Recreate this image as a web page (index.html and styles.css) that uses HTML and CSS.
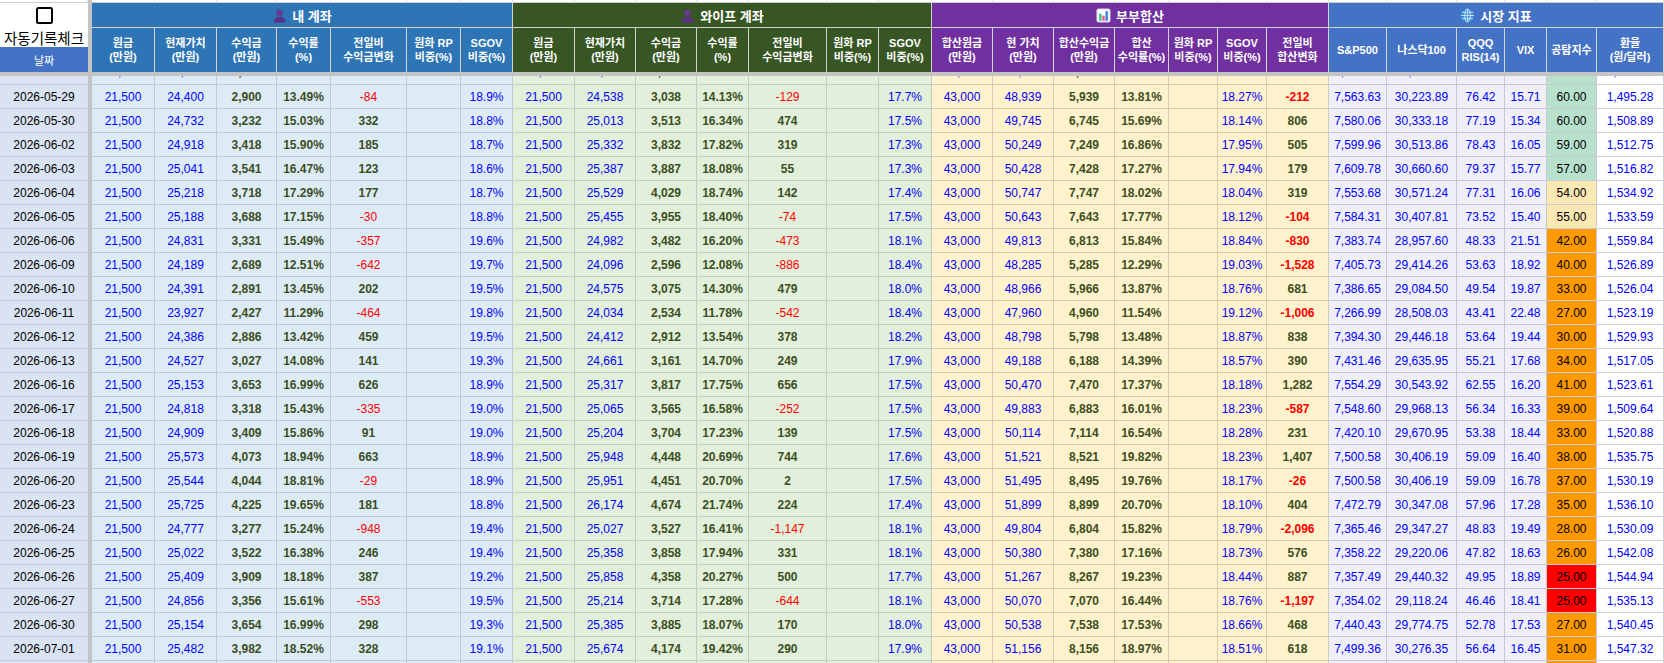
FILE: index.html
```html
<!DOCTYPE html>
<html lang="ko">
<head>
<meta charset="utf-8">
<title>자동기록체크</title>
<link rel="stylesheet" href="styles.css">
</head>
<body>
<div class="sheet">
  <div class="freeze-v"></div>
  <div class="freeze-h"></div>

  <div class="row top"><span></span><span></span><span></span><span></span><span></span><span></span><span></span><span></span><span></span><span></span><span></span><span></span><span></span><span></span><span></span><span></span><span></span><span></span><span></span><span></span><span></span><span></span><span></span><span></span><span></span><span></span><span></span><span></span></div>

  <div class="row grp">
    <span class="chk-cell"><i class="chk"></i></span>
    <span class="g-mine"><svg class="ico" viewBox="0 0 16 16"><circle cx="8" cy="5" r="3.4" fill="#64398f"/><path d="M1.6 15.5c0-4.1 2.7-6.2 6.4-6.2s6.4 2.1 6.4 6.2z" fill="#5a2f87"/></svg>내 계좌</span>
    <span class="g-wife"><svg class="ico" viewBox="0 0 16 16"><circle cx="8" cy="5" r="3.4" fill="#64398f"/><path d="M1.6 15.5c0-4.1 2.7-6.2 6.4-6.2s6.4 2.1 6.4 6.2z" fill="#5a2f87"/></svg>와이프 계좌</span>
    <span class="g-sum"><svg class="ico" viewBox="0 0 16 16"><rect x="1" y="1" width="14" height="14" rx="1.5" fill="#fff" stroke="#cfcfd8"/><rect x="3.3" y="6" width="2.6" height="7.6" fill="#3cbf8c"/><rect x="6.7" y="8.2" width="2.6" height="5.4" fill="#ef5a86"/><rect x="10.1" y="3.4" width="2.6" height="10.2" fill="#3d7fe0"/></svg>부부합산</span>
    <span class="g-mkt"><svg class="ico" viewBox="0 0 16 16"><circle cx="8" cy="8" r="7" fill="#3b8fd9"/><g fill="none" stroke="#d4e9fb" stroke-width="0.9"><ellipse cx="8" cy="8" rx="3" ry="7"/><path d="M8 1v14M1 8h14M2.2 4.6h11.6M2.2 11.4h11.6"/></g></svg>시장 지표</span>
  </div>

  <div class="row hd">
    <span class="auto">자동기록체크</span>
    <span class="h-mine"><span>원금<br>(만원)</span></span>
    <span class="h-mine"><span>현재가치<br>(만원)</span></span>
    <span class="h-mine"><span>수익금<br>(만원)</span></span>
    <span class="h-mine"><span>수익률<br>(%)</span></span>
    <span class="h-mine"><span>전일비<br>수익금변화</span></span>
    <span class="h-mine"><span>원화 RP<br>비중(%)</span></span>
    <span class="h-mine"><span>SGOV<br>비중(%)</span></span>
    <span class="h-wife"><span>원금<br>(만원)</span></span>
    <span class="h-wife"><span>현재가치<br>(만원)</span></span>
    <span class="h-wife"><span>수익금<br>(만원)</span></span>
    <span class="h-wife"><span>수익률<br>(%)</span></span>
    <span class="h-wife"><span>전일비<br>수익금변화</span></span>
    <span class="h-wife"><span>원화 RP<br>비중(%)</span></span>
    <span class="h-wife"><span>SGOV<br>비중(%)</span></span>
    <span class="h-sum"><span>합산원금<br>(만원)</span></span>
    <span class="h-sum"><span>현 가치<br>(만원)</span></span>
    <span class="h-sum"><span>합산수익금<br>(만원)</span></span>
    <span class="h-sum"><span>합산<br>수익률(%)</span></span>
    <span class="h-sum"><span>원화 RP<br>비중(%)</span></span>
    <span class="h-sum"><span>SGOV<br>비중(%)</span></span>
    <span class="h-sum"><span>전일비<br>합산변화</span></span>
    <span class="h-mkt"><span>S&amp;P500</span></span>
    <span class="h-mkt"><span>나스닥100</span></span>
    <span class="h-mkt"><span>QQQ<br>RIS(14)</span></span>
    <span class="h-mkt"><span>VIX</span></span>
    <span class="h-mkt"><span>공탐지수</span></span>
    <span class="h-mkt"><span>환율<br>(원/달러)</span></span>
  </div>
  <div class="row dh"><span>날짜</span></div>

  <div class="row r part"><span></span><span>21,500</span><span>24,484</span><span>2,984</span><span>13.88%</span><span>166</span><span></span><span>18.7%</span><span>21,500</span><span>24,667</span><span>3,167</span><span>14.73%</span><span>214</span><span></span><span>17.6%</span><span>43,000</span><span>49,151</span><span>6,151</span><span>14.30%</span><span></span><span>18.15%</span><span>380</span><span>7,552.14</span><span>30,418.52</span><span>78.10</span><span>15.20</span><span class="fg">61.00</span><span>1,492.66</span></div>

  <div class="row r"><span>2026-05-29</span><span>21,500</span><span>24,400</span><span>2,900</span><span>13.49%</span><span class="neg">-84</span><span></span><span>18.9%</span><span>21,500</span><span>24,538</span><span>3,038</span><span>14.13%</span><span class="neg">-129</span><span></span><span>17.7%</span><span>43,000</span><span>48,939</span><span>5,939</span><span>13.81%</span><span></span><span>18.27%</span><span class="neg">-212</span><span>7,563.63</span><span>30,223.89</span><span>76.42</span><span>15.71</span><span class="fg">60.00</span><span>1,495.28</span></div>
  <div class="row r"><span>2026-05-30</span><span>21,500</span><span>24,732</span><span>3,232</span><span>15.03%</span><span>332</span><span></span><span>18.8%</span><span>21,500</span><span>25,013</span><span>3,513</span><span>16.34%</span><span>474</span><span></span><span>17.5%</span><span>43,000</span><span>49,745</span><span>6,745</span><span>15.69%</span><span></span><span>18.14%</span><span>806</span><span>7,580.06</span><span>30,333.18</span><span>77.19</span><span>15.34</span><span class="fg">60.00</span><span>1,508.89</span></div>
  <div class="row r"><span>2026-06-02</span><span>21,500</span><span>24,918</span><span>3,418</span><span>15.90%</span><span>185</span><span></span><span>18.7%</span><span>21,500</span><span>25,332</span><span>3,832</span><span>17.82%</span><span>319</span><span></span><span>17.3%</span><span>43,000</span><span>50,249</span><span>7,249</span><span>16.86%</span><span></span><span>17.95%</span><span>505</span><span>7,599.96</span><span>30,513.86</span><span>78.43</span><span>16.05</span><span class="fg">59.00</span><span>1,512.75</span></div>
  <div class="row r"><span>2026-06-03</span><span>21,500</span><span>25,041</span><span>3,541</span><span>16.47%</span><span>123</span><span></span><span>18.6%</span><span>21,500</span><span>25,387</span><span>3,887</span><span>18.08%</span><span>55</span><span></span><span>17.3%</span><span>43,000</span><span>50,428</span><span>7,428</span><span>17.27%</span><span></span><span>17.94%</span><span>179</span><span>7,609.78</span><span>30,660.60</span><span>79.37</span><span>15.77</span><span class="fg">57.00</span><span>1,516.82</span></div>
  <div class="row r"><span>2026-06-04</span><span>21,500</span><span>25,218</span><span>3,718</span><span>17.29%</span><span>177</span><span></span><span>18.7%</span><span>21,500</span><span>25,529</span><span>4,029</span><span>18.74%</span><span>142</span><span></span><span>17.4%</span><span>43,000</span><span>50,747</span><span>7,747</span><span>18.02%</span><span></span><span>18.04%</span><span>319</span><span>7,553.68</span><span>30,571.24</span><span>77.31</span><span>16.06</span><span class="fy">54.00</span><span>1,534.92</span></div>
  <div class="row r"><span>2026-06-05</span><span>21,500</span><span>25,188</span><span>3,688</span><span>17.15%</span><span class="neg">-30</span><span></span><span>18.8%</span><span>21,500</span><span>25,455</span><span>3,955</span><span>18.40%</span><span class="neg">-74</span><span></span><span>17.5%</span><span>43,000</span><span>50,643</span><span>7,643</span><span>17.77%</span><span></span><span>18.12%</span><span class="neg">-104</span><span>7,584.31</span><span>30,407.81</span><span>73.52</span><span>15.40</span><span class="fy">55.00</span><span>1,533.59</span></div>
  <div class="row r"><span>2026-06-06</span><span>21,500</span><span>24,831</span><span>3,331</span><span>15.49%</span><span class="neg">-357</span><span></span><span>19.6%</span><span>21,500</span><span>24,982</span><span>3,482</span><span>16.20%</span><span class="neg">-473</span><span></span><span>18.1%</span><span>43,000</span><span>49,813</span><span>6,813</span><span>15.84%</span><span></span><span>18.84%</span><span class="neg">-830</span><span>7,383.74</span><span>28,957.60</span><span>48.33</span><span>21.51</span><span class="fo">42.00</span><span>1,559.84</span></div>
  <div class="row r"><span>2026-06-09</span><span>21,500</span><span>24,189</span><span>2,689</span><span>12.51%</span><span class="neg">-642</span><span></span><span>19.7%</span><span>21,500</span><span>24,096</span><span>2,596</span><span>12.08%</span><span class="neg">-886</span><span></span><span>18.4%</span><span>43,000</span><span>48,285</span><span>5,285</span><span>12.29%</span><span></span><span>19.03%</span><span class="neg">-1,528</span><span>7,405.73</span><span>29,414.26</span><span>53.63</span><span>18.92</span><span class="fo">40.00</span><span>1,526.89</span></div>
  <div class="row r"><span>2026-06-10</span><span>21,500</span><span>24,391</span><span>2,891</span><span>13.45%</span><span>202</span><span></span><span>19.5%</span><span>21,500</span><span>24,575</span><span>3,075</span><span>14.30%</span><span>479</span><span></span><span>18.0%</span><span>43,000</span><span>48,966</span><span>5,966</span><span>13.87%</span><span></span><span>18.76%</span><span>681</span><span>7,386.65</span><span>29,084.50</span><span>49.54</span><span>19.87</span><span class="fo">33.00</span><span>1,526.04</span></div>
  <div class="row r"><span>2026-06-11</span><span>21,500</span><span>23,927</span><span>2,427</span><span>11.29%</span><span class="neg">-464</span><span></span><span>19.8%</span><span>21,500</span><span>24,034</span><span>2,534</span><span>11.78%</span><span class="neg">-542</span><span></span><span>18.4%</span><span>43,000</span><span>47,960</span><span>4,960</span><span>11.54%</span><span></span><span>19.12%</span><span class="neg">-1,006</span><span>7,266.99</span><span>28,508.03</span><span>43.41</span><span>22.48</span><span class="fo">27.00</span><span>1,523.19</span></div>
  <div class="row r"><span>2026-06-12</span><span>21,500</span><span>24,386</span><span>2,886</span><span>13.42%</span><span>459</span><span></span><span>19.5%</span><span>21,500</span><span>24,412</span><span>2,912</span><span>13.54%</span><span>378</span><span></span><span>18.2%</span><span>43,000</span><span>48,798</span><span>5,798</span><span>13.48%</span><span></span><span>18.87%</span><span>838</span><span>7,394.30</span><span>29,446.18</span><span>53.64</span><span>19.44</span><span class="fo">30.00</span><span>1,529.93</span></div>
  <div class="row r"><span>2026-06-13</span><span>21,500</span><span>24,527</span><span>3,027</span><span>14.08%</span><span>141</span><span></span><span>19.3%</span><span>21,500</span><span>24,661</span><span>3,161</span><span>14.70%</span><span>249</span><span></span><span>17.9%</span><span>43,000</span><span>49,188</span><span>6,188</span><span>14.39%</span><span></span><span>18.57%</span><span>390</span><span>7,431.46</span><span>29,635.95</span><span>55.21</span><span>17.68</span><span class="fo">34.00</span><span>1,517.05</span></div>
  <div class="row r"><span>2026-06-16</span><span>21,500</span><span>25,153</span><span>3,653</span><span>16.99%</span><span>626</span><span></span><span>18.9%</span><span>21,500</span><span>25,317</span><span>3,817</span><span>17.75%</span><span>656</span><span></span><span>17.5%</span><span>43,000</span><span>50,470</span><span>7,470</span><span>17.37%</span><span></span><span>18.18%</span><span>1,282</span><span>7,554.29</span><span>30,543.92</span><span>62.55</span><span>16.20</span><span class="fo">41.00</span><span>1,523.61</span></div>
  <div class="row r"><span>2026-06-17</span><span>21,500</span><span>24,818</span><span>3,318</span><span>15.43%</span><span class="neg">-335</span><span></span><span>19.0%</span><span>21,500</span><span>25,065</span><span>3,565</span><span>16.58%</span><span class="neg">-252</span><span></span><span>17.5%</span><span>43,000</span><span>49,883</span><span>6,883</span><span>16.01%</span><span></span><span>18.23%</span><span class="neg">-587</span><span>7,548.60</span><span>29,968.13</span><span>56.34</span><span>16.33</span><span class="fo">39.00</span><span>1,509.64</span></div>
  <div class="row r"><span>2026-06-18</span><span>21,500</span><span>24,909</span><span>3,409</span><span>15.86%</span><span>91</span><span></span><span>19.0%</span><span>21,500</span><span>25,204</span><span>3,704</span><span>17.23%</span><span>139</span><span></span><span>17.5%</span><span>43,000</span><span>50,114</span><span>7,114</span><span>16.54%</span><span></span><span>18.28%</span><span>231</span><span>7,420.10</span><span>29,670.95</span><span>53.38</span><span>18.44</span><span class="fo">33.00</span><span>1,520.88</span></div>
  <div class="row r"><span>2026-06-19</span><span>21,500</span><span>25,573</span><span>4,073</span><span>18.94%</span><span>663</span><span></span><span>18.9%</span><span>21,500</span><span>25,948</span><span>4,448</span><span>20.69%</span><span>744</span><span></span><span>17.6%</span><span>43,000</span><span>51,521</span><span>8,521</span><span>19.82%</span><span></span><span>18.23%</span><span>1,407</span><span>7,500.58</span><span>30,406.19</span><span>59.09</span><span>16.40</span><span class="fo">38.00</span><span>1,535.75</span></div>
  <div class="row r"><span>2026-06-20</span><span>21,500</span><span>25,544</span><span>4,044</span><span>18.81%</span><span class="neg">-29</span><span></span><span>18.9%</span><span>21,500</span><span>25,951</span><span>4,451</span><span>20.70%</span><span>2</span><span></span><span>17.5%</span><span>43,000</span><span>51,495</span><span>8,495</span><span>19.76%</span><span></span><span>18.17%</span><span class="neg">-26</span><span>7,500.58</span><span>30,406.19</span><span>59.09</span><span>16.78</span><span class="fo">37.00</span><span>1,530.19</span></div>
  <div class="row r"><span>2026-06-23</span><span>21,500</span><span>25,725</span><span>4,225</span><span>19.65%</span><span>181</span><span></span><span>18.8%</span><span>21,500</span><span>26,174</span><span>4,674</span><span>21.74%</span><span>224</span><span></span><span>17.4%</span><span>43,000</span><span>51,899</span><span>8,899</span><span>20.70%</span><span></span><span>18.10%</span><span>404</span><span>7,472.79</span><span>30,347.08</span><span>57.96</span><span>17.28</span><span class="fo">35.00</span><span>1,536.10</span></div>
  <div class="row r"><span>2026-06-24</span><span>21,500</span><span>24,777</span><span>3,277</span><span>15.24%</span><span class="neg">-948</span><span></span><span>19.4%</span><span>21,500</span><span>25,027</span><span>3,527</span><span>16.41%</span><span class="neg">-1,147</span><span></span><span>18.1%</span><span>43,000</span><span>49,804</span><span>6,804</span><span>15.82%</span><span></span><span>18.79%</span><span class="neg">-2,096</span><span>7,365.46</span><span>29,347.27</span><span>48.83</span><span>19.49</span><span class="fo">28.00</span><span>1,530.09</span></div>
  <div class="row r"><span>2026-06-25</span><span>21,500</span><span>25,022</span><span>3,522</span><span>16.38%</span><span>246</span><span></span><span>19.4%</span><span>21,500</span><span>25,358</span><span>3,858</span><span>17.94%</span><span>331</span><span></span><span>18.1%</span><span>43,000</span><span>50,380</span><span>7,380</span><span>17.16%</span><span></span><span>18.73%</span><span>576</span><span>7,358.22</span><span>29,220.06</span><span>47.82</span><span>18.63</span><span class="fo">26.00</span><span>1,542.08</span></div>
  <div class="row r"><span>2026-06-26</span><span>21,500</span><span>25,409</span><span>3,909</span><span>18.18%</span><span>387</span><span></span><span>19.2%</span><span>21,500</span><span>25,858</span><span>4,358</span><span>20.27%</span><span>500</span><span></span><span>17.7%</span><span>43,000</span><span>51,267</span><span>8,267</span><span>19.23%</span><span></span><span>18.44%</span><span>887</span><span>7,357.49</span><span>29,440.32</span><span>49.95</span><span>18.89</span><span class="fr">25.00</span><span>1,544.94</span></div>
  <div class="row r"><span>2026-06-27</span><span>21,500</span><span>24,856</span><span>3,356</span><span>15.61%</span><span class="neg">-553</span><span></span><span>19.5%</span><span>21,500</span><span>25,214</span><span>3,714</span><span>17.28%</span><span class="neg">-644</span><span></span><span>18.1%</span><span>43,000</span><span>50,070</span><span>7,070</span><span>16.44%</span><span></span><span>18.76%</span><span class="neg">-1,197</span><span>7,354.02</span><span>29,118.24</span><span>46.46</span><span>18.41</span><span class="fr">25.00</span><span>1,535.13</span></div>
  <div class="row r"><span>2026-06-30</span><span>21,500</span><span>25,154</span><span>3,654</span><span>16.99%</span><span>298</span><span></span><span>19.3%</span><span>21,500</span><span>25,385</span><span>3,885</span><span>18.07%</span><span>170</span><span></span><span>18.0%</span><span>43,000</span><span>50,538</span><span>7,538</span><span>17.53%</span><span></span><span>18.66%</span><span>468</span><span>7,440.43</span><span>29,774.75</span><span>52.78</span><span>17.53</span><span class="fo">27.00</span><span>1,540.45</span></div>
  <div class="row r"><span>2026-07-01</span><span>21,500</span><span>25,482</span><span>3,982</span><span>18.52%</span><span>328</span><span></span><span>19.1%</span><span>21,500</span><span>25,674</span><span>4,174</span><span>19.42%</span><span>290</span><span></span><span>17.9%</span><span>43,000</span><span>51,156</span><span>8,156</span><span>18.97%</span><span></span><span>18.51%</span><span>618</span><span>7,499.36</span><span>30,276.35</span><span>56.64</span><span>16.45</span><span class="fo">31.00</span><span>1,547.32</span></div>
  <div class="row r"><span></span><span></span><span></span><span></span><span></span><span></span><span></span><span></span><span></span><span></span><span></span><span></span><span></span><span></span><span></span><span></span><span></span><span></span><span></span><span></span><span></span><span></span><span></span><span></span><span></span><span></span><span class="fo"></span><span></span></div>
</div>
</body>
</html>
```
FILE: styles.css
```css
html, body {
  margin: 0;
  padding: 0;
  height: 663px;
  overflow: hidden;
  background: #ffffff;
}

.sheet {
  display: grid;
  grid-template-columns:
    88px 4px
    63px 62px 60px 54px 76px 54px 52px
    62px 61px 61px 52px 78px 52px 53px
    61px 61px 61px 54px 49px 49px 62px
    58px 70px 48px 42px 50px 67px;
  grid-template-rows: 3px 25px 19px 25px 4px 9px repeat(25, 24px);
  font-family: "Liberation Sans", Arial, "Noto Sans CJK KR", sans-serif;
  font-size: 12px;
  color: #000;
}

.row { display: contents; }

.freeze-v {
  grid-column: 2;
  grid-row: 1 / -1;
  background: #c4c4c4;
}
.freeze-h {
  grid-column: 1 / -1;
  grid-row: 5;
  background: #c4c4c4;
}

.row > span {
  display: flex;
  align-items: center;
  justify-content: center;
  box-sizing: border-box;
  overflow: hidden;
  white-space: nowrap;
  text-align: center;
}

/* top strip */
.top > span {
  background: #fff;
  border-right: 1px solid #e2e2e2;
  border-bottom: 1px solid #cdcdcd;
}

/* group headers */
.grp > span {
  color: #fff;
  font-weight: bold;
  font-size: 13px;
  gap: 5px;
  border-right: 1px solid #d2d2d2;
  border-bottom: 1px solid #d2d2d2;
}
.grp > .chk-cell {
  background: #fff;
  border: none;
}
.chk {
  display: block;
  width: 17px;
  height: 17px;
  box-sizing: border-box;
  border: 2.5px solid #000;
  border-radius: 2.5px;
}
.ico { width: 15px; height: 15px; flex: none; }
.g-mine { grid-column: span 7; background: #2e75b6; }
.g-wife { grid-column: span 7; background: #375623; }
.g-sum { grid-column: span 7; background: #7030a0; }
.g-mkt { grid-column: span 6; background: #4472c4; }

/* column headers */
.hd > span {
  grid-row: span 2;
  color: #fff;
  font-weight: bold;
  font-size: 11px;
  line-height: 14px;
  border-right: 1px solid #d2d2d2;
}
.hd > .auto {
  grid-row: span 1;
  background: #fff;
  color: #000;
  font-weight: normal;
  font-size: 14.5px;
  line-height: 19px;
  border: none;
  font-family: "Noto Sans CJK KR", sans-serif;
}
.h-mine { background: #2e75b6; }
.h-wife { background: #375623; }
.h-sum { background: #7030a0; }
.h-mkt { background: #4472c4; }

.dh > span {
  background: #4472c4;
  color: #fff;
  font-size: 11px;
}

/* data rows */
.r > span {
  border-right: 1px solid #c2c9d1;
  border-bottom: 1px solid #c2c9d1;
}
.part > span {
  align-items: flex-end;
  line-height: 23px;
}

.r > :nth-child(1) { background: #dae3f3; border-right: none; }
.r > :nth-child(n+2):nth-child(-n+8) { background: #ddebf7; }
.r > :nth-child(n+9):nth-child(-n+15) { background: #e2efda; border-color: #c4cdbd; }
.r > :nth-child(n+16):nth-child(-n+22) { background: #fff2cc; border-color: #d3cdb8; }
.r > :nth-child(n+23):nth-child(-n+26) { background: #efeff7; border-color: #c9c9d3; }
.r > :nth-child(27) { background: #efeff7; border-color: #c9c9d3; }
.r > :nth-child(28) { background: #ffffff; border-color: #cfcfd6; }

.r > .fg { background: #b7e1cd; }
.r > .fy { background: #fce8b2; }
.r > .fo { background: #ff9900; }
.r > .fr { background: #ff0000; }

/* text colours */
.r > :nth-child(2), .r > :nth-child(3), .r > :nth-child(8),
.r > :nth-child(9), .r > :nth-child(10), .r > :nth-child(15),
.r > :nth-child(16), .r > :nth-child(17), .r > :nth-child(21),
.r > :nth-child(23), .r > :nth-child(24), .r > :nth-child(25),
.r > :nth-child(26), .r > :nth-child(28) {
  color: #0000ff;
}
.r > :nth-child(4), .r > :nth-child(5), .r > :nth-child(6),
.r > :nth-child(11), .r > :nth-child(12), .r > :nth-child(13),
.r > :nth-child(18), .r > :nth-child(19), .r > :nth-child(22) {
  color: #3b4e1e;
  font-weight: bold;
}
.r > .neg { color: #ff0000; font-weight: normal; }
.r > :nth-child(22).neg { font-weight: bold; }
```
